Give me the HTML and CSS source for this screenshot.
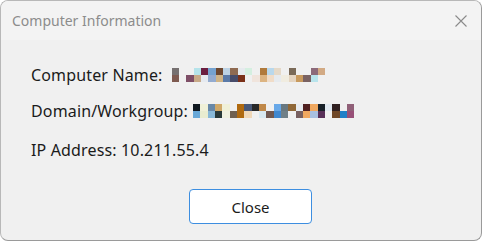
FILE: index.html
```html
<!DOCTYPE html>
<html>
<head>
<meta charset="utf-8">
<link rel="stylesheet" href="styles.css">
</head>
<body>
<div class="window">
  <div class="titlebar">
    <span class="title">Computer Information</span>
    <span class="close-x">
      <svg width="12" height="12" viewBox="0 0 12 12"><path d="M0.5 0.5 L11.5 11.5 M11.5 0.5 L0.5 11.5" stroke="#8a8a8a" stroke-width="1.1" fill="none"/></svg>
    </span>
  </div>
  <div class="content">
    <div class="row">
      <span class="label">Computer Name:</span>
      <span class="pix pix-21">
        <i style="background:#767070"></i><i></i><i></i><i style="background:#b5e3ea"></i><i style="background:#6b1e40"></i><i style="background:#75a2cf"></i><i style="background:#6e4830"></i><i style="background:#bcd2e4"></i><i style="background:#8f6a51"></i><i style="background:#e6eaee"></i><i style="background:#d5efe0"></i><i></i><i style="background:#b07a3c"></i><i style="background:#b9d8ec"></i><i style="background:#e5d9c8"></i><i></i><i style="background:#7a6a58"></i><i></i><i></i><i style="background:#8c6a7a"></i><i style="background:#d2aa84"></i>
        <i style="background:#7e5a50"></i><i></i><i style="background:#7e4e66"></i><i style="background:#c8aa88"></i><i style="background:#e6eaf0"></i><i style="background:#93abd0"></i><i style="background:#d0b486"></i><i style="background:#5a7aa8"></i><i style="background:#474c6a"></i><i style="background:#7a3018"></i><i></i><i style="background:#f0e4dc"></i><i style="background:#dcb482"></i><i style="background:#f0dcc8"></i><i style="background:#e6eaee"></i><i style="background:#f0ece0"></i><i style="background:#e4d4c0"></i><i style="background:#c89a5e"></i><i style="background:#7a6262"></i><i style="background:#b8e4ec"></i><i></i>
      </span>
    </div>
    <div class="row">
      <span class="label">Domain/Workgroup:</span>
      <span class="pix pix-22">
        <i style="background:#101820"></i><i style="background:#f0f0d8"></i><i style="background:#6888a8"></i><i style="background:#d0a868"></i><i style="background:#f0f0d8"></i><i></i><i style="background:#b06a10"></i><i style="background:#485878"></i><i style="background:#282828"></i><i style="background:#c08848"></i><i></i><i style="background:#68a8e8"></i><i style="background:#687880"></i><i style="background:#906838"></i><i style="background:#e8ecf0"></i><i style="background:#502020"></i><i style="background:#f0a860"></i><i style="background:#182028"></i><i style="background:#e0e8f0"></i><i style="background:#302020"></i><i></i><i style="background:#906078"></i>
        <i style="background:#68a8d8"></i><i style="background:#e8ecd0"></i><i style="background:#88b8d8"></i><i style="background:#283838"></i><i style="background:#f0f0e0"></i><i style="background:#706050"></i><i style="background:#b06a10"></i><i style="background:#f0d8b8"></i><i></i><i style="background:#d8e8f0"></i><i style="background:#705850"></i><i style="background:#4088d0"></i><i style="background:#708088"></i><i></i><i style="background:#786060"></i><i style="background:#f0a860"></i><i style="background:#a8c0e0"></i><i style="background:#583058"></i><i></i><i style="background:#704828"></i><i style="background:#2080c8"></i><i style="background:#985078"></i>
      </span>
    </div>
    <div class="row row-ip">
      <span class="label">IP Address: 10.211.55.4</span>
    </div>
  </div>
  <div class="footer">
    <button class="btn">Close</button>
  </div>
</div>
</body>
</html>
```
FILE: styles.css
```css
html, body {
  margin: 0;
  padding: 0;
  background: #ffffff;
}
body {
  font-family: "Noto Sans", "Open Sans", sans-serif;
  width: 482px;
  height: 241px;
  overflow: hidden;
}
.window {
  box-sizing: border-box;
  width: 482px;
  height: 241px;
  border: 1px solid #b8b8b8;
  border-right-color: #9a9a9a;
  border-bottom-color: #9a9a9a;
  border-radius: 8px;
  background: #f0f0f0;
  overflow: hidden;
  display: flex;
  flex-direction: column;
}
.titlebar {
  height: 39px;
  flex: none;
  background: #f3f3f3;
  display: flex;
  align-items: center;
  justify-content: space-between;
  padding: 0 14px 0 11px;
}
.title {
  font-size: 14px;
  color: #8c8c8c;
  line-height: 20px;
}
.close-x {
  display: flex;
  width: 12px;
  height: 12px;
}
.content {
  padding: 25px 0 0 30px;
  display: flex;
  flex-direction: column;
  gap: 16px;
}
.row {
  display: flex;
  align-items: center;
  height: 20px;
}
.row-ip {
  margin-top: 3px;
}
.label {
  font-size: 16px;
  letter-spacing: 0.15px;
  line-height: 20px;
  color: #1b1b1b;
  white-space: pre;
}
.pix {
  display: inline-grid;
  grid-auto-rows: 7.3px;
  flex: none;
}
.pix-21 {
  grid-template-columns: repeat(21, 7.33px);
  margin-left: 9px;
}
.pix-22 {
  grid-template-columns: repeat(22, 7.33px);
  margin-left: 5px;
}
.pix i {
  display: block;
}
.footer {
  padding: 29px 0 0 188px;
}
.btn {
  box-sizing: border-box;
  width: 123px;
  height: 35px;
  border: 1px solid #3d8ee0;
  border-radius: 4px;
  background: #ffffff;
  font-family: "Noto Sans", "Open Sans", sans-serif;
  font-size: 15px;
  color: #1b1b1b;
  padding: 0;
}
```
